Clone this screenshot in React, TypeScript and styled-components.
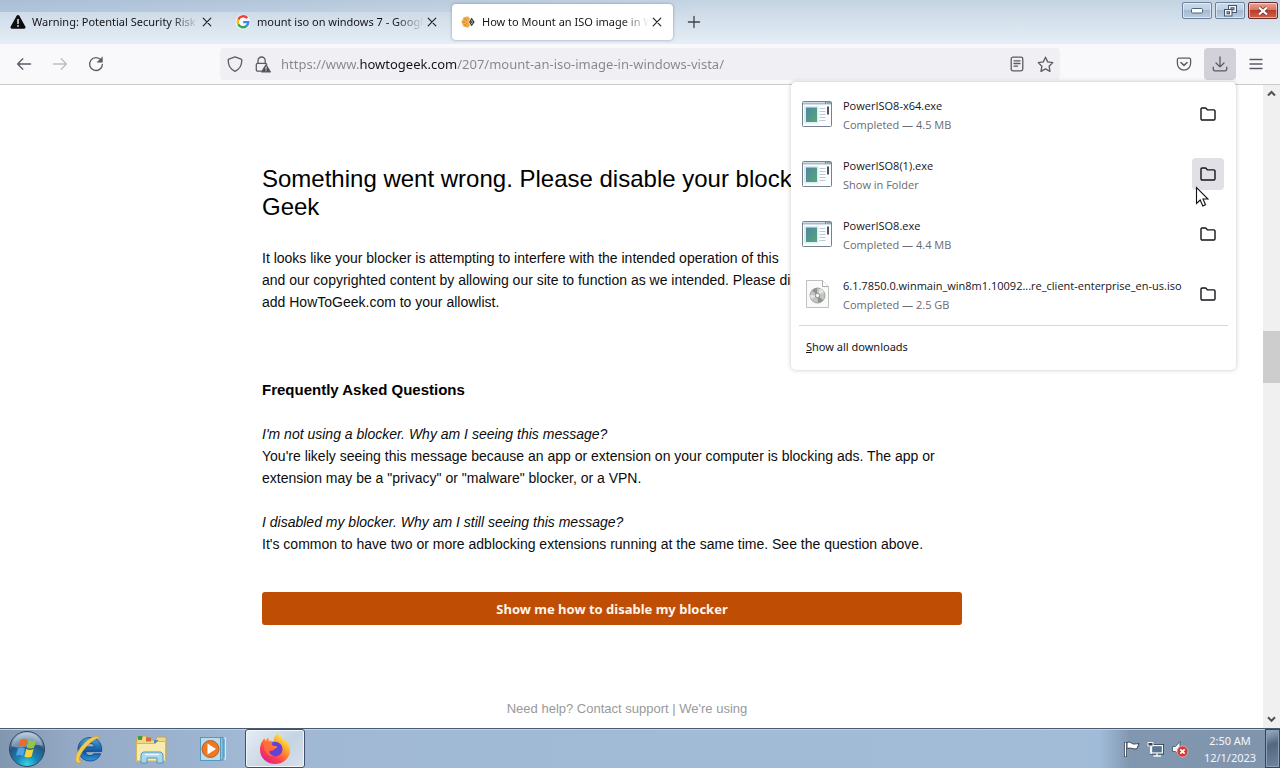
import React from "react";
import styled, { createGlobalStyle, css } from "styled-components";

const UI = `"Open Sans", "Noto Sans", sans-serif`;
const CHROME = `"Noto Sans", "Open Sans", sans-serif`;
const PAGE = `"Liberation Sans", Arial, sans-serif`;

const GlobalStyle = createGlobalStyle`
  *, *::before, *::after { box-sizing: border-box; }
  body { margin: 0; background: #fff; font-family: ${UI}; }
  button { border: 0; background: none; padding: 0; font: inherit; color: inherit; }
  h1, h2, p, ul { margin: 0; padding: 0; }
  svg { display: block; flex: none; }
`;

const Desktop = styled.div`
  display: flex;
  flex-direction: column;
  min-height: 100vh;
`;

/* ---------- title bar with tabs ---------- */

const TitleBar = styled.header`
  display: flex;
  align-items: flex-start;
  height: 44px;
  padding-right: 2px;
  background:
    linear-gradient(100deg, rgba(130, 160, 195, 0.4), rgba(255, 255, 255, 0) 55%) top / 100% 12px no-repeat,
    linear-gradient(#c3d3e2 0, #cddae7 10px, #d5e1ec 22px, #e6eef6 100%);
`;

const TabList = styled.nav`
  display: flex;
  padding-top: 4px;
`;

const Tab = styled.div<{ $active?: boolean }>`
  display: flex;
  align-items: center;
  width: 221px;
  height: 36px;
  margin: 0 2px;
  padding: 0 8px;
  border-radius: 4px;
  ${(p) =>
    p.$active &&
    css`
      background: #fff;
      box-shadow: 0 0 3px rgba(90, 100, 120, 0.6);
    `}
`;

const TabTitle = styled.span`
  flex: 1;
  min-width: 0;
  margin-left: 6px;
  overflow: hidden;
  white-space: nowrap;
  font: 11px/18px ${CHROME};
  color: #15141a;
  mask-image: linear-gradient(to left, transparent, #000 28px);
`;

const SmallButton = styled.button<{ $width?: number }>`
  display: grid;
  place-items: center;
  width: ${(p) => p.$width ?? 16}px;
  height: 36px;
`;

const WindowButtons = styled.div`
  display: flex;
  gap: 3px;
  margin-left: auto;
  padding-top: 2px;
`;

const WindowButton = styled.button<{ $close?: boolean }>`
  display: grid;
  place-items: center;
  width: 30px;
  height: 17px;
  border: 1px solid ${(p) => (p.$close ? "#6b2a2c" : "#6d819b")};
  border-radius: 2px;
  box-shadow: inset 0 0 0 1px rgba(255, 255, 255, 0.5);
  background: ${(p) =>
    p.$close
      ? "linear-gradient(#e5a597 0, #d5705c 50%, #bc3c26 50%, #d0644a 100%)"
      : "linear-gradient(#cbdae9 0, #bdcfe1 50%, #a5bad0 50%, #b9cde2 100%)"};
`;

/* ---------- navigation toolbar ---------- */

const Toolbar = styled.div`
  position: relative;
  z-index: 2;
  display: flex;
  align-items: center;
  height: 41px;
  padding: 0 8px;
  gap: 4px;
  background: #f9f9fb;
  border-bottom: 1px solid #cccccf;
`;

const ToolButton = styled.button<{ $pressed?: boolean }>`
  display: grid;
  place-items: center;
  width: 32px;
  height: 32px;
  border-radius: 4px;
  color: #5b5b66;
  background: ${(p) => (p.$pressed ? "#d2d1da" : "transparent")};
  &:disabled { color: #bdbdc3; }
`;

const AddressBar = styled.div`
  display: flex;
  flex: 1;
  align-items: center;
  min-width: 0;
  height: 32px;
  margin: 0 104px;
  padding: 0 1px;
  border-radius: 4px;
  background: #f0f0f4;
`;

const AddressButton = styled.button`
  display: grid;
  place-items: center;
  width: 28px;
  height: 28px;
  color: #5b5b66;
`;

const AddressInput = styled.input`
  flex: 1;
  min-width: 0;
  height: 28px;
  padding: 0;
  margin-left: 4px;
  border: 0;
  outline: 0;
  font: 13px/20px ${CHROME};
  color: #15141a;
  -webkit-text-fill-color: transparent;
  background: linear-gradient(to right, #85858c 78px, #15141a 78px 176px, #85858c 176px);
  background-clip: text;
  -webkit-background-clip: text;
`;

/* ---------- downloads panel ---------- */

const DownloadsPanel = styled.section`
  position: absolute;
  top: 38px;
  right: 44px;
  width: 445px;
  padding: 2px 8px 6px;
  border-radius: 5px;
  background: #fff;
  box-shadow: 0 0 4px rgba(58, 57, 68, 0.3);
`;

const DownloadList = styled.ul`
  list-style: none;
  padding-bottom: 1px;
  border-bottom: 1px solid #d8d8dc;
`;

const DownloadRow = styled.li`
  display: flex;
  align-items: center;
  height: 60px;
  padding: 0 4px 0 2px;
  gap: 10px;
`;

const DownloadText = styled.div`
  flex: 1;
  min-width: 0;
  padding-top: 1px;
  white-space: nowrap;
  font-size: 11px;
  line-height: 19px;
`;

const FileName = styled.div`
  color: #15141a;
`;

const FileStatus = styled.div`
  color: #6a6a72;
`;

const FolderButton = styled.button<{ $hover?: boolean }>`
  display: grid;
  place-items: center;
  width: 32px;
  height: 32px;
  margin-left: -12px;
  border-radius: 4px;
  color: #15141a;
  background: ${(p) => (p.$hover ? "#e0e0e6" : "transparent")};
`;

const ShowAll = styled.button`
  display: block;
  width: 100%;
  height: 34px;
  margin-top: 4px;
  padding: 0 7px;
  text-align: left;
  font: 11px/20px ${CHROME};
  color: #15141a;
`;

const Pointer = styled.svg`
  position: absolute;
  top: 104px;
  right: 27px;
`;

/* ---------- web page ---------- */

const Viewport = styled.div`
  display: flex;
  flex: 1;
`;

const PageArea = styled.main`
  display: flex;
  flex: 1;
  justify-content: center;
  padding: 80px 39px 0 0;
  background: #fff;
  font-family: ${PAGE};
`;

const Article = styled.article`
  width: 700px;
  max-width: 100%;
  font-size: 14px;
  line-height: 22px;
  color: #0c0c0c;
`;

const Headline = styled.h1`
  margin-bottom: 26px;
  font-size: 24px;
  line-height: 28px;
  font-weight: 400;
  color: #000;
`;

const FaqTitle = styled.h2`
  margin-top: 66px;
  font-size: 15px;
  line-height: 22px;
  color: #000;
`;

const Faq = styled.p`
  margin-top: 22px;
`;

const HelpButton = styled.button`
  display: block;
  width: 100%;
  height: 33px;
  margin-top: 37px;
  border-radius: 3px;
  background: #bf4e04;
  color: #fff5ea;
  font: bold 13px/20px "Noto Sans", sans-serif;
`;

const HelpLine = styled.p`
  padding: 73px 4px 7px 34px;
  text-align: center;
  font-size: 13px;
  color: #999;
  a { color: inherit; text-decoration: none; }
`;

const ScrollTrack = styled.div`
  display: flex;
  flex-direction: column;
  width: 17px;
  background: #f0f0f0;
`;

const ScrollRail = styled.div`
  display: flex;
  flex: 1;
  flex-direction: column;
  &::before { content: ""; flex: 229; }
  &::after { content: ""; flex: 328; }
`;

const ScrollThumb = styled.div`
  height: 52px;
  background: #cdcdcd;
`;

const ScrollArrow = styled.button`
  display: grid;
  place-items: center;
  height: 17px;
`;

/* ---------- taskbar ---------- */

const Taskbar = styled.footer`
  display: flex;
  height: 40px;
  border-top: 1px solid #4a5a70;
  box-shadow: inset 0 1px 0 #c3d3e5;
  background: linear-gradient(
    to right,
    #8196af 0,
    #93a9c5 70px,
    #a0b8d4 240px,
    #a2bcd8 calc(100% - 200px),
    #9fbbd9 calc(100% - 180px),
    #8197b0 calc(100% - 150px),
    #8094ac 100%
  );
`;

const StartButton = styled.button`
  display: grid;
  place-items: center;
  width: 54px;
  margin-right: 5px;
`;

const TaskButtons = styled.div`
  display: flex;
  gap: 2px;
`;

const TaskButton = styled.button<{ $active?: boolean }>`
  display: grid;
  place-items: center;
  width: 60px;
  height: 39px;
  border-radius: 3px;
  ${(p) =>
    p.$active &&
    css`
      border: 1px solid #3f5068;
      box-shadow: inset 0 0 0 1px #f2f6fa;
      background: linear-gradient(135deg, #e6edf5, #c5d3e2 60%, #d8e2ec);
    `}
`;

const Tray = styled.div`
  display: flex;
  align-items: center;
  gap: 7px;
  margin-left: auto;
`;

const Clock = styled.div`
  width: 68px;
  margin: 0 -6px 0 0;
  text-align: center;
  font: 11px/17px ${CHROME};
  color: #f2f7fc;
`;

const ShowDesktop = styled.button`
  align-self: stretch;
  width: 15px;
  border: 1px solid #33465c;
  box-shadow: inset 0 0 0 1px #8ba0b8;
  background: linear-gradient(160deg, #9fb2c6, #53677f 40%, #71869e);
`;

/* ---------- drawings ---------- */

const stroke = {
  fill: "none",
  stroke: "currentColor",
  strokeWidth: 1.3,
  strokeLinecap: "round" as const,
  strokeLinejoin: "round" as const,
};

const CloseGlyph = () => (
  <svg width="10" height="10" viewBox="0 0 10 10" {...stroke} color="#222">
    <path d="M1.200 1.200l7.600 7.600M8.800 1.200L1.200 8.800" strokeWidth="1.200" />
  </svg>
);

const WarningIcon = () => (
  <svg width="16" height="16" viewBox="0 0 16 16">
    <path d="M6.8 1.6a1.4 1.4 0 0 1 2.4 0l6.1 11a1.4 1.4 0 0 1-1.2 2.1H1.9a1.4 1.4 0 0 1-1.2-2.1z" fill="#0c0c0d" />
    <path d="M8 5.6v4" stroke="#dfe8f0" strokeWidth="1.5" strokeLinecap="round" />
    <circle cx="8" cy="12" r="0.9" fill="#dfe8f0" />
  </svg>
);

const GoogleIcon = () => (
  <svg width="16" height="16" viewBox="0 0 16 16">
    <circle cx="8" cy="8" r="7.5" fill="#fff" opacity="0.8" />
    <g fill="none" strokeWidth="2.4">
      <path d="M12.2 4.1A5.3 5.3 0 0 0 3.3 5.6" stroke="#ea4335" />
      <path d="M3.3 5.5a5.3 5.3 0 0 0 0 5" stroke="#fbbc05" />
      <path d="M3.3 10.4a5.3 5.3 0 0 0 8.2 1.6" stroke="#34a853" />
      <path d="M8.2 8.1h5.1a5.3 5.3 0 0 1-1.9 4" stroke="#4285f4" />
    </g>
  </svg>
);

const GeekIcon = () => (
  <svg width="16" height="16" viewBox="0 0 16 16">
    <path d="M3.500 3.300L8 2.300l2.200 2.200L8.600 8l1.600 3.600L8 13.700l-4.500-1L1.300 8z" fill="#f3b04c" />
    <path d="M4.500 5.200l1.800-.6M2.800 8h2.400M4.500 10.800l2 .6M6 6.600l1.400-.8M6.300 9.400l1 .6" stroke="#b06a1c" strokeWidth="0.8" />
    <path d="M11.600 3.800L14.600 8l-3 4.200L9 8z" fill="#2c2c2c" />
    <path d="M11.700 5.600L13.200 8l-1.500 2.400L10.400 8z" fill="#c9c9c9" />
    <path d="M11.800 7v2" stroke="#222" />
  </svg>
);

const PlusIcon = () => (
  <svg width="14" height="14" viewBox="0 0 14 14" {...stroke} color="#444">
    <path d="M7 1.4v11.2M1.4 7h11.2" />
  </svg>
);

const BackIcon = () => (
  <svg width="16" height="16" viewBox="0 0 16 16" {...stroke}>
    <path d="M14.600 8H1.600M6.800 2.800L1.600 8l5.200 5.200" />
  </svg>
);

const ForwardIcon = () => (
  <svg width="16" height="16" viewBox="0 0 16 16" {...stroke}>
    <path d="M1.400 8h13M9.200 2.800L14.400 8l-5.200 5.200" />
  </svg>
);

const ReloadIcon = () => (
  <svg width="16" height="16" viewBox="0 0 16 16" {...stroke}>
    <path d="M13.1 4.2A6.4 6.4 0 1 0 14.4 8.4" />
    <path d="M14.4 1.2v5H9.4z" fill="currentColor" strokeWidth="0.6" />
  </svg>
);

const ShieldIcon = () => (
  <svg width="16" height="16" viewBox="0 0 16 16" {...stroke}>
    <path d="M8 .9l6.1 2.2c.5.2.7.5.7 1 0 5-2 9.300-6.8 11.200C3.200 13.400 1.200 9.100 1.200 4.100c0-.5.2-.8.7-1z" />
  </svg>
);

const LockWarningIcon = () => (
  <svg width="18" height="17" viewBox="0 0 18 17" {...stroke}>
    <path d="M4 7.300V4.600a3.600 3.600 0 0 1 7.200 0v2.700" />
    <path d="M7 15.200H3.700a1.400 1.400 0 0 1-1.400-1.400V8.700a1.400 1.400 0 0 1 1.400-1.400h7.800a1.400 1.400 0 0 1 1.300 1" />
    <path d="M12 8.900l4.300 7H7.700z" fill="#4a4a52" />
    <path d="M12 11v2.300M12 14.700v.1" stroke="#f0f0f4" strokeWidth="1" />
  </svg>
);

const ReaderIcon = () => (
  <svg width="16" height="16" viewBox="0 0 16 16" {...stroke}>
    <rect x="2.200" y="1.200" width="11.600" height="13.600" rx="1.800" />
    <path d="M5 4.800h6M5 7.500h6M5 10.200h3.500" />
  </svg>
);

const StarIcon = () => (
  <svg width="17" height="17" viewBox="0 0 17 17" {...stroke}>
    <path d="M8.500 1.200l2.200 4.700 5.100.7-3.700 3.600.9 5.200-4.500-2.500L4 15.400l.9-5.200L1.200 6.600l5.100-.7z" />
  </svg>
);

const PocketIcon = () => (
  <svg width="16" height="16" viewBox="0 0 16 16" {...stroke}>
    <path d="M2.700 2.200h10.600c.8 0 1.300.6 1.300 1.300v4.100a6.600 6.600 0 0 1-13.200 0V3.500c0-.7.5-1.300 1.300-1.300z" />
    <path d="M4.900 6.500L8 9.400l3.100-2.900" strokeWidth="1.500" />
  </svg>
);

const DownloadIcon = () => (
  <svg width="16" height="16" viewBox="0 0 16 16" {...stroke}>
    <path d="M8 1v9.800M4 7l4 3.900L12 7" />
    <path d="M1.300 11.200v2a1.700 1.700 0 0 0 1.700 1.700h10a1.700 1.700 0 0 0 1.700-1.700v-2" />
  </svg>
);

const MenuIcon = () => (
  <svg width="14" height="14" viewBox="0 0 14 14" {...stroke}>
    <path d="M1 2.500h12M1 7h12M1 11.500h12" />
  </svg>
);

const FolderIcon = () => (
  <svg width="16" height="14" viewBox="0 0 16 14" {...stroke} strokeWidth="1.400">
    <path d="M1 2.100C1 1.400 1.500 1 2.100 1h3.200c.5 0 .8.200 1.100.6l.9 1.300h6.500c.7 0 1.200.4 1.200 1.100v7.800c0 .7-.5 1.200-1.200 1.200H2.200C1.500 13 1 12.500 1 11.800z" />
  </svg>
);

const ExeIcon = () => (
  <svg width="32" height="28" viewBox="0 0 32 28">
    <defs>
      <linearGradient id="exeFill" x1="0" y1="0" x2="1" y2="1">
        <stop offset="0" stopColor="#4f86a2" />
        <stop offset="1" stopColor="#55a878" />
      </linearGradient>
    </defs>
    <rect x="1.500" y="1.500" width="29" height="25" rx="1" fill="#fcfdfe" stroke="#75818c" />
    <path d="M2 3.500h28" stroke="#a5bccd" strokeWidth="2" />
    <path d="M24 2.800h1.200M26.300 2.800h1.200M28.500 2.800h1.200" stroke="#3d464f" />
    <rect x="3" y="6" width="14.500" height="17.500" fill="#e0ebf1" />
    <rect x="5" y="7.500" width="11" height="14.500" fill="url(#exeFill)" />
    <path d="M18.500 8.500h6M18.500 11.500h6M18.500 14.500h6M18.500 17.500h6M18.500 20.500h6" stroke="#bccbd5" />
    <rect x="26" y="6.500" width="2" height="8" fill="#4c555e" />
  </svg>
);

const IsoIcon = () => (
  <svg width="32" height="30" viewBox="0 0 32 30">
    <path d="M5.500 1.500h16l6 6v21h-22z" fill="#fafafa" stroke="#bfc1bf" />
    <path d="M21.500 1.500v6h6" fill="#fff" stroke="#a9aba9" />
    <circle cx="16.500" cy="16.500" r="7.500" fill="#c3c6c3" stroke="#a0a3a0" />
    <path d="M16.500 16.500L11 11.500a7.500 7.500 0 0 1 5-2.400zM16.500 16.500l5.800 4.800a7.500 7.500 0 0 1-5.300 2.600z" fill="#8f9490" />
    <path d="M16.500 16.500L19 9.500a7.500 7.500 0 0 1 4 3.500zM16.500 16.500L10 20a7.500 7.500 0 0 1-.9-4z" fill="#e2e5e1" />
    <circle cx="16.500" cy="16.500" r="2.200" fill="#f7f7f7" stroke="#8b8f8b" />
  </svg>
);

const StartOrb = () => (
  <svg width="38" height="38" viewBox="0 0 38 38">
    <defs>
      <radialGradient id="orb" cx="0.5" cy="0.95" r="0.9">
        <stop offset="0" stopColor="#35d6ea" />
        <stop offset="0.35" stopColor="#1784b4" />
        <stop offset="0.7" stopColor="#27557f" />
        <stop offset="1" stopColor="#9fb8cb" />
      </radialGradient>
    </defs>
    <circle cx="19" cy="19" r="17.500" fill="url(#orb)" stroke="#30475f" />
    <path d="M3.500 16A15.700 15.700 0 0 1 34.500 16C26 12 13 21 3.500 16z" fill="#dfeaf2" opacity="0.4" />
    <path d="M12.300 9.500c2.500-1.300 4.800-1 7 .2l-1.900 7.400c-2.200-1.300-4.500-1.400-7-.3z" fill="#ec6a2c" />
    <path d="M20.600 10.300c2.300 1.100 4.700 1.100 7.400-.1l-2 7.500c-2.600 1.100-5 1-7.300-.2z" fill="#93c83e" />
    <path d="M10 18.300c2.500-1.200 4.800-1 7 .2l-2 7.400c-2.200-1.200-4.500-1.400-7-.3z" fill="#4fa5e4" />
    <path d="M18.300 19c2.300 1.200 4.700 1.200 7.300 0l-2 7.500c-2.600 1.200-5 1.100-7.200-.1z" fill="#fcd13c" />
  </svg>
);

const ExplorerE = () => (
  <svg width="32" height="32" viewBox="0 0 32 32">
    <defs>
      <linearGradient id="ie" x1="0" y1="0" x2="0" y2="1">
        <stop offset="0" stopColor="#4aa6e0" />
        <stop offset="0.6" stopColor="#0f559f" />
        <stop offset="1" stopColor="#2b9be0" />
      </linearGradient>
    </defs>
    <path
      d="M17 4.500C10 4.500 5 9.800 5 16.200S10.300 28 17 28c5.200 0 9-2.800 10.600-7.200h-6.900c-.8 1.200-2 1.800-3.600 1.800-2.700 0-4.300-1.500-4.400-4H28.600C29.500 10.600 24.900 4.500 17 4.500zm-4.300 9.400c.4-2.300 2-3.600 4.500-3.600s4 1.300 4.200 3.600z"
      fill="url(#ie)"
      stroke="#123f77"
      strokeWidth="0.800"
    />
    <path d="M27 5C24.500 1 16.500 4.500 10 11.500 4 18 1 26.500 3.500 29.300c1.500 1.500 4 .7 6.500-1.300-2 .6-3.200.3-3.500-.7-.7-2.800 2-8.300 6.500-13.300C18 8.500 24 4.300 27 5z" fill="#f2cd52" stroke="#c99b28" strokeWidth="0.600" />
  </svg>
);

const FolderTask = () => (
  <svg width="34" height="32" viewBox="0 0 34 32">
    <path d="M2.500 5h6V3h4v4h9l1.500-3h9v23h-29z" fill="#f0d987" stroke="#c7a652" />
    <rect x="4" y="3" width="4" height="4" fill="#3d9a56" />
    <rect x="12" y="4.500" width="5" height="4" fill="#d6683a" />
    <rect x="20" y="7" width="4" height="3" fill="#4a8dc4" />
    <path d="M2.500 10.500h19l2-2h8V28h-29z" fill="#f8ebae" stroke="#d5b65f" />
    <path d="M7 30v-7.500c0-2.500 1.500-3.500 3.500-3.500h15c2 0 3.500 1 3.500 3.500V30h-6v-5H13v5z" fill="#a9d8ed" stroke="#5195b9" />
    <path d="M11 21.500h14" stroke="#e6f6fc" strokeWidth="1.500" />
  </svg>
);

const MediaPlayer = () => (
  <svg width="28" height="28" viewBox="0 0 28 28">
    <rect x="7" y="3" width="19.500" height="21" fill="#78b5d6" stroke="#ddebf4" />
    <rect x="4.500" y="2.500" width="19.500" height="22.500" fill="#8ec7e4" stroke="#4e8fb5" />
    <rect x="1.500" y="2.500" width="20" height="23" fill="#b5dcef" stroke="#5798bb" />
    <circle cx="11.500" cy="14" r="8.500" fill="#ec7a25" stroke="#c9581a" />
    <path d="M8.500 8.500l8.500 5.500-8.500 5.500z" fill="#fff" />
  </svg>
);

const Firefox = () => (
  <svg width="32" height="32" viewBox="0 0 32 32">
    <defs>
      <linearGradient id="fx" x1="0.85" y1="0.1" x2="0.2" y2="0.95">
        <stop offset="0" stopColor="#fff04a" />
        <stop offset="0.35" stopColor="#ff9a2a" />
        <stop offset="0.7" stopColor="#ff3f4f" />
        <stop offset="1" stopColor="#e0208a" />
      </linearGradient>
    </defs>
    <path d="M18.500.8c2.200 1.300 3.900 3 4.900 5.300 4.700 1.600 7.600 6.100 7.600 11C31 25.400 24.400 31 16 31S1 25 1 16.800C1 12 3 7.500 5.600 5.200l.5 2.900 3-3.700.8 3.400c1.800-.3 3.300-.1 4.800.7C14.600 5.200 16 2.300 18.500.8z" fill="url(#fx)" />
    <path d="M12 10c4.500-3 11.500 0 11.500 6.300 0 4.300-3.300 7-7.300 7s-6.900-2.800-6.700-6.300c1.600 1.700 4.100 1.300 5.400-.5 1.100-1.400 3-1.300 3.300-2.200.3-1-1.800-1.400-3-1.400-1.500 0-2.800-1-3.200-2.900z" fill="#6541d8" />
    <path d="M4.500 9.500c3-1.500 6.500-1.500 9.500 1.500-2 .4-3 1.700-3 3l4.500.2c-.8 2.300-3.500 2.300-5 3.300-.8 3 2.500 5.500 5.500 5.300-6.500 2-11.500-3.800-11.500-13.300z" fill="#ff7139" opacity="0.85" />
  </svg>
);

const FlagIcon = () => (
  <svg width="17" height="18" viewBox="0 0 17 18">
    <path d="M2.500 2v15" stroke="#2d3b4c" strokeWidth="3" />
    <path d="M4 2.500c3-1.500 4.500 1.500 7 1.500 1.500 0 3-.4 5-.4l-2 5c-3 1.500-5-1.500-10-.2z" fill="#fff" stroke="#354557" />
    <path d="M2.500 2.500v14" stroke="#fff" strokeWidth="1.400" />
  </svg>
);

const NetworkIcon = () => (
  <svg width="17" height="18" viewBox="0 0 17 18">
    <rect x="4.500" y="5.500" width="11" height="7.500" fill="#5d7690" stroke="#26384b" strokeWidth="3" />
    <rect x="4.500" y="5.500" width="11" height="7.500" fill="#5d7690" stroke="#f4f8fb" strokeWidth="1.300" />
    <path d="M10 13.500v2M6.500 16h7.500" stroke="#f4f8fb" strokeWidth="1.500" />
    <path d="M1 2.500h5v3.500H1z" fill="#31445a" stroke="#f4f8fb" />
    <path d="M3.500 6.500v7H5" fill="none" stroke="#f4f8fb" />
  </svg>
);

const MutedIcon = () => (
  <svg width="18" height="18" viewBox="0 0 18 18">
    <path d="M1.500 6.500h3l4.500-5v15l-4.500-5h-3z" fill="#eff4f8" stroke="#40526a" strokeWidth="0.800" />
    <circle cx="11.500" cy="11.500" r="5.500" fill="#d33a35" stroke="#f0b8b0" strokeWidth="0.800" />
    <path d="M9.300 9.300l4.400 4.400M13.700 9.300l-4.400 4.400" stroke="#fff" strokeWidth="1.700" />
  </svg>
);

const Chevron = ({ down }: { down?: boolean }) => (
  <svg width="9" height="7" viewBox="0 0 9 7" fill="none" stroke="#505050" strokeWidth="2">
    <path d={down ? "M1 1.300l3.500 3.500L8 1.300" : "M1 5.500L4.500 2 8 5.500"} />
  </svg>
);

/* ---------- data ---------- */

const tabs = [
  { title: "Warning: Potential Security Risk Ahead", icon: <WarningIcon /> },
  { title: "mount iso on windows 7 - Google Search", icon: <GoogleIcon /> },
  { title: "How to Mount an ISO image in Windows", icon: <GeekIcon />, active: true },
];

const downloads = [
  { name: "PowerISO8-x64.exe", status: "Completed — 4.5 MB", icon: <ExeIcon /> },
  { name: "PowerISO8(1).exe", status: "Show in Folder", icon: <ExeIcon />, hover: true },
  { name: "PowerISO8.exe", status: "Completed — 4.4 MB", icon: <ExeIcon /> },
  { name: "6.1.7850.0.winmain_win8m1.10092...re_client-enterprise_en-us.iso", status: "Completed — 2.5 GB", icon: <IsoIcon /> },
];

export default function App() {
  return (
    <Desktop>
      <GlobalStyle />
      <TitleBar>
        <TabList aria-label="Tabs">
          {tabs.map((t) => (
            <Tab key={t.title} $active={t.active}>
              {t.icon}
              <TabTitle>{t.title}</TabTitle>
              <SmallButton aria-label="Close tab"><CloseGlyph /></SmallButton>
            </Tab>
          ))}
          <SmallButton $width={38} aria-label="New tab"><PlusIcon /></SmallButton>
        </TabList>
        <WindowButtons>
          <WindowButton aria-label="Minimize">
            <svg width="12" height="6" viewBox="0 0 12 6"><rect x="0.500" y="0.500" width="11" height="4.500" rx="1" fill="#fff" stroke="#50617a" /></svg>
          </WindowButton>
          <WindowButton aria-label="Restore">
            <svg width="13" height="12" viewBox="0 0 13 12" fill="#f3f7fb" stroke="#44546b">
              <rect x="4.500" y="0.500" width="8" height="7" />
              <rect x="7" y="2.800" width="3" height="2" fill="#a5bad0" />
              <rect x="0.500" y="4.500" width="7.500" height="6.500" />
              <rect x="3" y="6.800" width="2.500" height="2" fill="#a5bad0" />
            </svg>
          </WindowButton>
          <WindowButton $close aria-label="Close">
            <svg width="12" height="10" viewBox="0 0 12 10" fill="none">
              <path d="M2 1.500l8 7M10 1.500l-8 7" stroke="#6b2a2c" strokeWidth="3.600" />
              <path d="M2 1.500l8 7M10 1.500l-8 7" stroke="#fff" strokeWidth="2.300" />
            </svg>
          </WindowButton>
        </WindowButtons>
      </TitleBar>

      <Toolbar>
        <ToolButton aria-label="Back"><BackIcon /></ToolButton>
        <ToolButton aria-label="Forward" disabled><ForwardIcon /></ToolButton>
        <ToolButton aria-label="Reload"><ReloadIcon /></ToolButton>
        <AddressBar>
          <AddressButton aria-label="Tracking protection"><ShieldIcon /></AddressButton>
          <AddressButton aria-label="Site information"><LockWarningIcon /></AddressButton>
          <AddressInput
            aria-label="Address"
            spellCheck={false}
            defaultValue="https://www.howtogeek.com/207/mount-an-iso-image-in-windows-vista/"
          />
          <AddressButton aria-label="Reader view"><ReaderIcon /></AddressButton>
          <AddressButton aria-label="Bookmark this page"><StarIcon /></AddressButton>
        </AddressBar>
        <ToolButton aria-label="Save to Pocket"><PocketIcon /></ToolButton>
        <ToolButton aria-label="Downloads" $pressed><DownloadIcon /></ToolButton>
        <ToolButton aria-label="Menu"><MenuIcon /></ToolButton>

        <DownloadsPanel aria-label="Downloads">
          <DownloadList>
            {downloads.map((d) => (
              <DownloadRow key={d.name}>
                {d.icon}
                <DownloadText>
                  <FileName>{d.name}</FileName>
                  <FileStatus>{d.status}</FileStatus>
                </DownloadText>
                <FolderButton aria-label="Show in folder" $hover={d.hover}><FolderIcon /></FolderButton>
              </DownloadRow>
            ))}
          </DownloadList>
          <ShowAll><u>S</u>how all downloads</ShowAll>
          <Pointer width="14" height="22" viewBox="0 0 14 22">
            <path d="M1.500 1.500v16l3.700-3.500 2.600 6 2.700-1.200L8 13h5z" fill="#fff" stroke="#111" strokeWidth="1.100" />
          </Pointer>
        </DownloadsPanel>
      </Toolbar>

      <Viewport>
        <PageArea>
          <Article>
            <Headline>
              Something went wrong. Please disable your blocker
              <br />
              Geek
            </Headline>
            <p>
              It looks like your blocker is attempting to interfere with the intended operation of this
              <br />
              and our copyrighted content by allowing our site to function as we intended. Please disable
              <br />
              add HowToGeek.com to your allowlist.
            </p>
            <FaqTitle>Frequently Asked Questions</FaqTitle>
            <Faq>
              <em>I'm not using a blocker. Why am I seeing this message?</em>
              <br />
              You're likely seeing this message because an app or extension on your computer is blocking ads. The app or
              extension may be a "privacy" or "malware" blocker, or a VPN.
            </Faq>
            <Faq>
              <em>I disabled my blocker. Why am I still seeing this message?</em>
              <br />
              It's common to have two or more adblocking extensions running at the same time. See the question above.
            </Faq>
            <HelpButton>Show me how to disable my blocker</HelpButton>
            <HelpLine>
              Need help? <a href="#support">Contact support</a> | <a href="#using">We're using</a>
            </HelpLine>
          </Article>
        </PageArea>
        <ScrollTrack>
          <ScrollArrow aria-label="Scroll up"><Chevron /></ScrollArrow>
          <ScrollRail><ScrollThumb /></ScrollRail>
          <ScrollArrow aria-label="Scroll down"><Chevron down /></ScrollArrow>
        </ScrollTrack>
      </Viewport>

      <Taskbar>
        <StartButton aria-label="Start"><StartOrb /></StartButton>
        <TaskButtons>
          <TaskButton aria-label="Internet Explorer"><ExplorerE /></TaskButton>
          <TaskButton aria-label="Windows Explorer"><FolderTask /></TaskButton>
          <TaskButton aria-label="Media Player"><MediaPlayer /></TaskButton>
          <TaskButton aria-label="Firefox" $active><Firefox /></TaskButton>
        </TaskButtons>
        <Tray>
          <FlagIcon />
          <NetworkIcon />
          <MutedIcon />
          <Clock>
            <div>2:50 AM</div>
            <div>12/1/2023</div>
          </Clock>
          <ShowDesktop aria-label="Show desktop" />
        </Tray>
      </Taskbar>
    </Desktop>
  );
}
